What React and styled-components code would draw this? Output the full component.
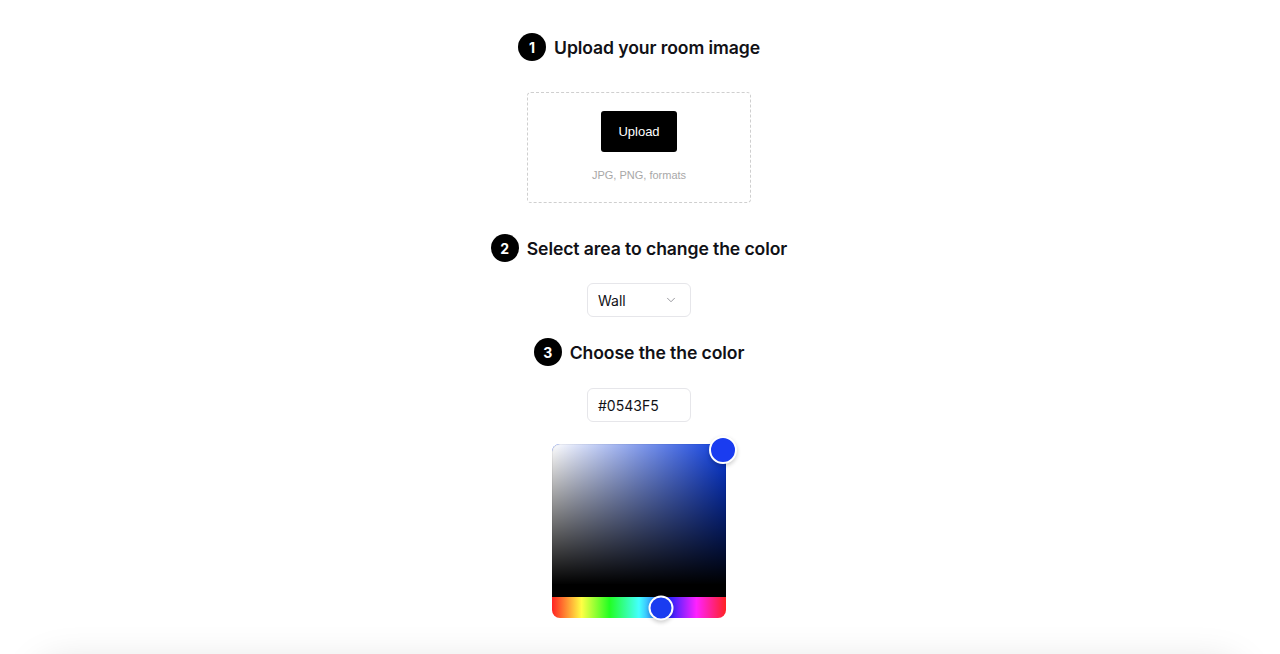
import React, { useState } from "react";
import styled, { createGlobalStyle } from "styled-components";
import { ChevronDown } from "lucide-react";

const Global = createGlobalStyle`
  html, body { margin: 0; padding: 0; background: #fff; }
  body { font-family: Inter, "Noto Sans", sans-serif; color: #0f0f14; overflow: hidden; }
  * { box-sizing: border-box; }
`;

const Page = styled.div`
  display: flex;
  flex-direction: column;
  align-items: center;
  padding: 33px 2px 0 0;
  width: 1280px;
  height: 654px;
  overflow: hidden;
  & > * { flex-shrink: 0; }
`;

const StepTitle = styled.div`
  display: flex;
  align-items: center;
  gap: 8px;
  height: 28px;
  margin-top: ${(p) => p.$top || 0}px;
  h2 {
    margin: 0;
    font-size: 17.6px;
    font-weight: 600;
    letter-spacing: -0.1px;
    color: #111116;
  }
`;

const Num = styled.span`
  width: 28px;
  height: 28px;
  border-radius: 50%;
  background: #000;
  color: #fff;
  display: flex;
  align-items: center;
  justify-content: center;
  font-size: 14px;
  font-weight: 700;
`;

const Drop = styled.div`
  margin-top: 31px;
  width: 224px;
  height: 111px;
  border: 1px dashed #cfcfcf;
  border-radius: 4px;
  display: flex;
  flex-direction: column;
  align-items: center;
  padding-top: 18px;
`;

const UploadButton = styled.button`
  width: 76px;
  height: 41px;
  flex-shrink: 0;
  border: none;
  border-radius: 3px;
  background: #000;
  color: #fff;
  font-family: "Liberation Sans", Arial, sans-serif;
  font-size: 13px;
`;

const Hint = styled.p`
  margin: 17px 0 0;
  font-family: "Liberation Sans", Arial, sans-serif;
  font-size: 11px;
  color: #a8a8a8;
`;

const Field = styled.div`
  margin-top: ${(p) => p.$top}px;
  width: 104px;
  height: 34px;
  border: 1px solid #e6e6ea;
  border-radius: 6px;
  display: flex;
  align-items: center;
  justify-content: space-between;
  padding: 0 12px 0 10px;
  font-size: 14px;
  color: #111116;
  svg { color: #8a8a90; }
`;

const Picker = styled.div`
  margin-top: 22px;
  width: 174px;
  height: 174px;
  display: flex;
  flex-direction: column;
  position: relative;
`;

const Saturation = styled.div`
  position: relative;
  flex: 1;
  border-radius: 8px 8px 0 0;
  border-bottom: 12px solid #000;
  background-color: ${(p) => p.$hue};
  background-image: linear-gradient(to top, #000, rgba(0, 0, 0, 0)),
    linear-gradient(to right, #fff, rgba(255, 255, 255, 0));
  box-shadow: inset 0 0 0 1px rgba(0, 0, 0, 0.05);
`;

const Hue = styled.div`
  position: relative;
  height: 21px;
  flex-shrink: 0;
  border-radius: 0 0 8px 8px;
  background: linear-gradient(
    to right,
    #f22 0%,
    #ff4 17%,
    #2f2 33%,
    #4ff 50%,
    #22f 67%,
    #f2f 83%,
    #f22 100%
  );
`;

const Pointer = styled.div`
  position: absolute;
  width: ${(p) => p.$size}px;
  height: ${(p) => p.$size}px;
  border-radius: 50%;
  background: #1a3cf0;
  border: 2px solid #fff;
  box-shadow: 0 2px 4px rgba(0, 0, 0, 0.2);
  transform: translate(-50%, -50%);
  z-index: 2;
`;

const Card = styled.div`
  margin-top: 47px;
  width: 1200px;
  min-height: 200px;
  border-radius: 20px;
  background: #fff;
  box-shadow: 0 0 40px rgba(0, 0, 0, 0.15);
`;

export default function App() {
  const [area] = useState("Wall");
  const [color] = useState("#0543F5");

  return (
    <>
      <Global />
      <Page>
        <StepTitle>
          <Num>1</Num>
          <h2>Upload your room image</h2>
        </StepTitle>
        <Drop>
          <UploadButton>Upload</UploadButton>
          <Hint>JPG, PNG, formats</Hint>
        </Drop>

        <StepTitle $top={31}>
          <Num>2</Num>
          <h2>Select area to change the color</h2>
        </StepTitle>
        <Field $top={21}>
          <span>{area}</span>
          <ChevronDown size={14} strokeWidth={1.5} />
        </Field>

        <StepTitle $top={21}>
          <Num>3</Num>
          <h2>Choose the the color</h2>
        </StepTitle>
        <Field $top={22}>
          <span>{color}</span>
        </Field>

        <Picker>
          <Saturation $hue="hsl(226, 92%, 45%)">
            <Pointer $size={28} style={{ left: "98%", top: "4%" }} />
          </Saturation>
          <Hue>
            <Pointer $size={25} style={{ left: "62.5%", top: "50%" }} />
          </Hue>
        </Picker>

        <Card />
      </Page>
    </>
  );
}
